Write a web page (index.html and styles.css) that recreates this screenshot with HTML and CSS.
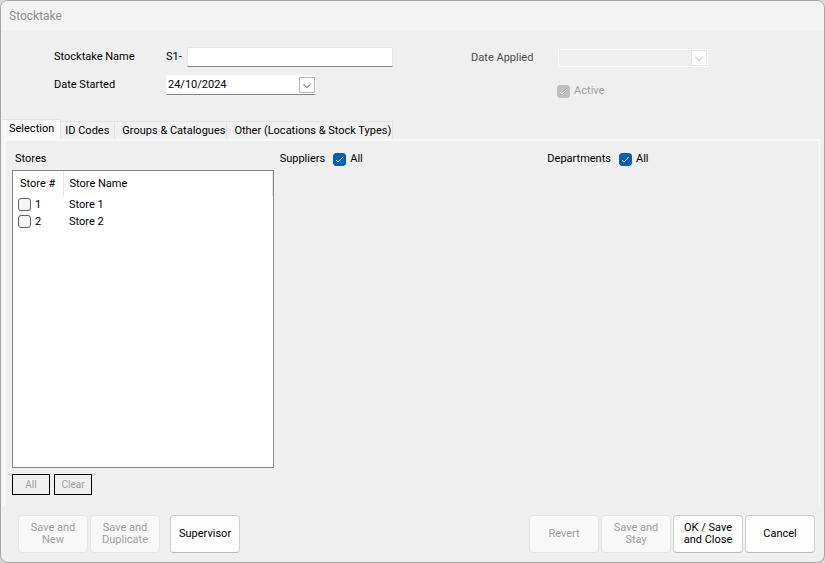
FILE: index.html
```html
<!DOCTYPE html>
<html lang="en">
<head>
<meta charset="utf-8">
<title>Stocktake</title>
<link rel="stylesheet" href="styles.css">
</head>
<body>
<main class="window">
  <h1 class="titlebar">Stocktake</h1>

  <form class="details">
    <div class="details-column">
      <div class="field">
        <label class="field-label" for="name">Stocktake Name</label>
        <span class="prefix">S1-</span>
        <input class="text-input" id="name" type="text">
      </div>
      <div class="field">
        <label class="field-label" for="started">Date Started</label>
        <span class="date-box">
          <select class="date-select" id="started"><option>24/10/2024</option></select>
          <svg class="chevron" viewBox="0 0 16 16" aria-hidden="true"><path d="M4 7l4 4 4-4"/></svg>
        </span>
      </div>
    </div>
    <div class="details-column details-applied">
      <div class="field">
        <label class="field-label label-muted" for="applied">Date Applied</label>
        <span class="date-box date-disabled">
          <select class="date-select" id="applied" disabled><option></option></select>
          <svg class="chevron" viewBox="0 0 16 16" aria-hidden="true"><path d="M4 7l4 4 4-4"/></svg>
        </span>
      </div>
      <label class="check check-disabled active-check">
        <span class="box"><input type="checkbox" checked disabled><svg viewBox="0 0 13 13" aria-hidden="true"><path d="M3 7l2 2 5-5"/></svg></span>
        Active
      </label>
    </div>
  </form>

  <div class="tabs" role="tablist">
    <button class="tab tab-selected" type="button" role="tab" aria-selected="true">Selection</button>
    <button class="tab" type="button" role="tab">ID Codes</button>
    <button class="tab tab-wide" type="button" role="tab">Groups &amp; Catalogues</button>
    <button class="tab tab-wide" type="button" role="tab">Other (Locations &amp; Stock Types)</button>
  </div>

  <section class="panel" role="tabpanel">
    <div class="group stores">
      <h2 class="group-title stores-title">Stores</h2>
      <div class="list">
        <table class="store-table">
          <thead>
            <tr><th class="col-number">Store #</th><th>Store Name</th></tr>
          </thead>
          <tbody>
            <tr><td><label class="check"><span class="box"><input type="checkbox"></span>1</label></td><td>Store 1</td></tr>
            <tr><td><label class="check"><span class="box"><input type="checkbox"></span>2</label></td><td>Store 2</td></tr>
          </tbody>
        </table>
      </div>
      <div class="list-actions">
        <button class="small-button" type="button" disabled>All</button>
        <button class="small-button" type="button" disabled>Clear</button>
      </div>
    </div>
    <div class="group">
      <div class="group-head">
        <h2 class="group-title">Suppliers</h2>
        <label class="check"><span class="box"><input type="checkbox" checked><svg viewBox="0 0 13 13" aria-hidden="true"><path d="M3 7l2 2 5-5"/></svg></span>All</label>
      </div>
    </div>
    <div class="group">
      <div class="group-head">
        <h2 class="group-title">Departments</h2>
        <label class="check"><span class="box"><input type="checkbox" checked><svg viewBox="0 0 13 13" aria-hidden="true"><path d="M3 7l2 2 5-5"/></svg></span>All</label>
      </div>
    </div>
  </section>

  <footer class="footer">
    <div class="button-row">
      <button class="button" type="button" disabled>Save and New</button>
      <button class="button" type="button" disabled>Save and Duplicate</button>
    </div>
    <button class="button" type="button">Supervisor</button>
    <div class="button-row button-row-end">
      <button class="button" type="button" disabled>Revert</button>
      <button class="button" type="button" disabled>Save and Stay</button>
      <button class="button" type="button">OK / Save and Close</button>
      <button class="button" type="button">Cancel</button>
    </div>
  </footer>
</main>
</body>
</html>
```
FILE: styles.css
```css
* {
  box-sizing: border-box;
}

body {
  margin: 0;
  background: #d8d8d8;
  color: #000;
  font: 11px/16px Roboto, "Liberation Sans", sans-serif;
}

button,
input,
select {
  margin: 0;
  color: inherit;
  font: inherit;
}

.window {
  display: flex;
  flex-direction: column;
  min-height: 100vh;
  border: 1px solid #a6a6a6;
  border-radius: 8px;
  background: #efefef;
  overflow: hidden;
}

.titlebar {
  margin: 0;
  padding: 7px 8px;
  background: #f3f3f3;
  color: #8f8f8f;
  font-size: 12px;
  font-weight: 400;
}

/* Stocktake details */

.details {
  display: grid;
  grid-template-columns: 57fr 43fr;
  height: 88px;
  padding-top: 16px;
}

.details-column {
  display: flex;
  flex-direction: column;
  gap: 8px;
  padding-left: 53px;
}

.details-applied {
  gap: 16px;
  padding-top: 2px;
  padding-left: 1px;
}

.field {
  display: flex;
  align-items: center;
}

.field-label {
  width: 112px;
}

.details-applied .field-label {
  width: 87px;
}

.label-muted {
  color: #4c4c4c;
}

.prefix {
  width: 21px;
}

.text-input {
  width: 206px;
  height: 20px;
  padding: 0 2px;
  border: 1px solid #e6e6e6;
  border-bottom-color: #858585;
  background: #fff;
}

.date-box {
  position: relative;
  width: 150px;
}

.date-select {
  display: block;
  width: 100%;
  height: 20px;
  padding: 0 20px 0 1px;
  border: 1px solid #fafafa;
  border-bottom-color: #858585;
  border-radius: 0;
  background: #fff;
  appearance: none;
}

.chevron {
  position: absolute;
  top: 2px;
  right: 1px;
  width: 16px;
  height: 16px;
  border: 1px solid #b4bcc2;
  background: #fdfdfd;
  fill: none;
  stroke: #444;
  pointer-events: none;
}

.date-disabled .date-select {
  height: 18px;
  border-color: #fbfbfb;
  background: #efefef;
  opacity: 1;
}

.date-disabled .chevron {
  top: 1px;
  border-color: #e6e6e6;
  stroke: #a0a0a0;
}

/* Tick boxes */

.check {
  display: inline-flex;
  align-items: center;
  gap: 4px;
}

.box {
  position: relative;
  display: block;
  width: 13px;
  height: 13px;
}

.box input {
  display: block;
  width: 13px;
  height: 13px;
  border: 1px solid #5f5f5f;
  border-radius: 3px;
  background: #f5f5f5;
  appearance: none;
}

.box input:checked {
  border-color: #005fb8;
  background: #005fb8;
}

.box input:disabled {
  border-color: #bfbfbf;
  background: #bfbfbf;
}

.box svg {
  position: absolute;
  inset: 0;
  fill: none;
  stroke: #fff;
  pointer-events: none;
}

.check-disabled {
  color: #a0a0a0;
}

.active-check {
  margin-left: 86px;
}

/* Tabs */

.tabs {
  display: flex;
  align-items: flex-end;
  padding-left: 1px;
}

.tab {
  height: 18px;
  padding: 0 5px 0 4px;
  border: 1px solid #e3e3e3;
  border-width: 1px 1px 0 0;
  background: #f1f1f1;
  white-space: nowrap;
}

.tab-wide {
  padding-left: 7px;
  padding-right: 1px;
}

.tab-selected {
  height: 20px;
  padding: 0 6px 2px 7px;
  background: #f9f9f9;
}

.panel {
  display: grid;
  flex: 1;
  grid-template-columns: repeat(3, 1fr);
  gap: 6px;
  margin: 0 4px 0 1px;
  padding: 10px 10px 11px 7px;
  border: solid #f9f9f9;
  border-width: 2px 1px 0 3px;
}

.group {
  display: flex;
  flex-direction: column;
}

.group-head {
  display: flex;
  align-items: center;
  gap: 8px;
}

.group-title {
  margin: 0;
  font-size: 11px;
  font-weight: 400;
}

.stores-title {
  padding-left: 3px;
}

.list {
  flex: 1;
  margin-top: 3px;
  border: 1px solid #82878f;
  background: #fff;
}

.store-table {
  width: 100%;
  border-collapse: collapse;
  table-layout: fixed;
}

.store-table th {
  height: 25px;
  padding: 1px 6px 0;
  border-right: 1px solid #e5e5e5;
  font-weight: 400;
  text-align: left;
  white-space: nowrap;
}

.store-table .col-number {
  width: 50px;
  padding-left: 7px;
}

.store-table td {
  height: 17px;
  padding: 0 6px;
}

.store-table td:first-child {
  padding: 0 5px;
}

.store-table .check {
  display: flex;
}

.list-actions {
  display: flex;
  gap: 4px;
  margin-top: 6px;
}

.small-button {
  width: 38px;
  height: 21px;
  padding: 0;
  border: 1px solid #000;
  background: #efefef;
  color: #a0a0a0;
  font-size: 10px;
}

/* Footer */

.footer {
  display: flex;
  gap: 10px;
  padding: 9px 9px 9px 17px;
}

.button-row {
  display: flex;
  gap: 2px;
}

.button-row-end {
  margin-left: auto;
}

.button {
  width: 70px;
  height: 38px;
  padding: 0 8px;
  border: 1px solid #d0d0d0;
  border-bottom-color: #bababa;
  border-radius: 4px;
  background: #fdfdfd;
  line-height: 12px;
}

.button:disabled {
  border-color: #e6e6e6;
  background: #f8f8f8;
  color: #a0a0a0;
}
```
